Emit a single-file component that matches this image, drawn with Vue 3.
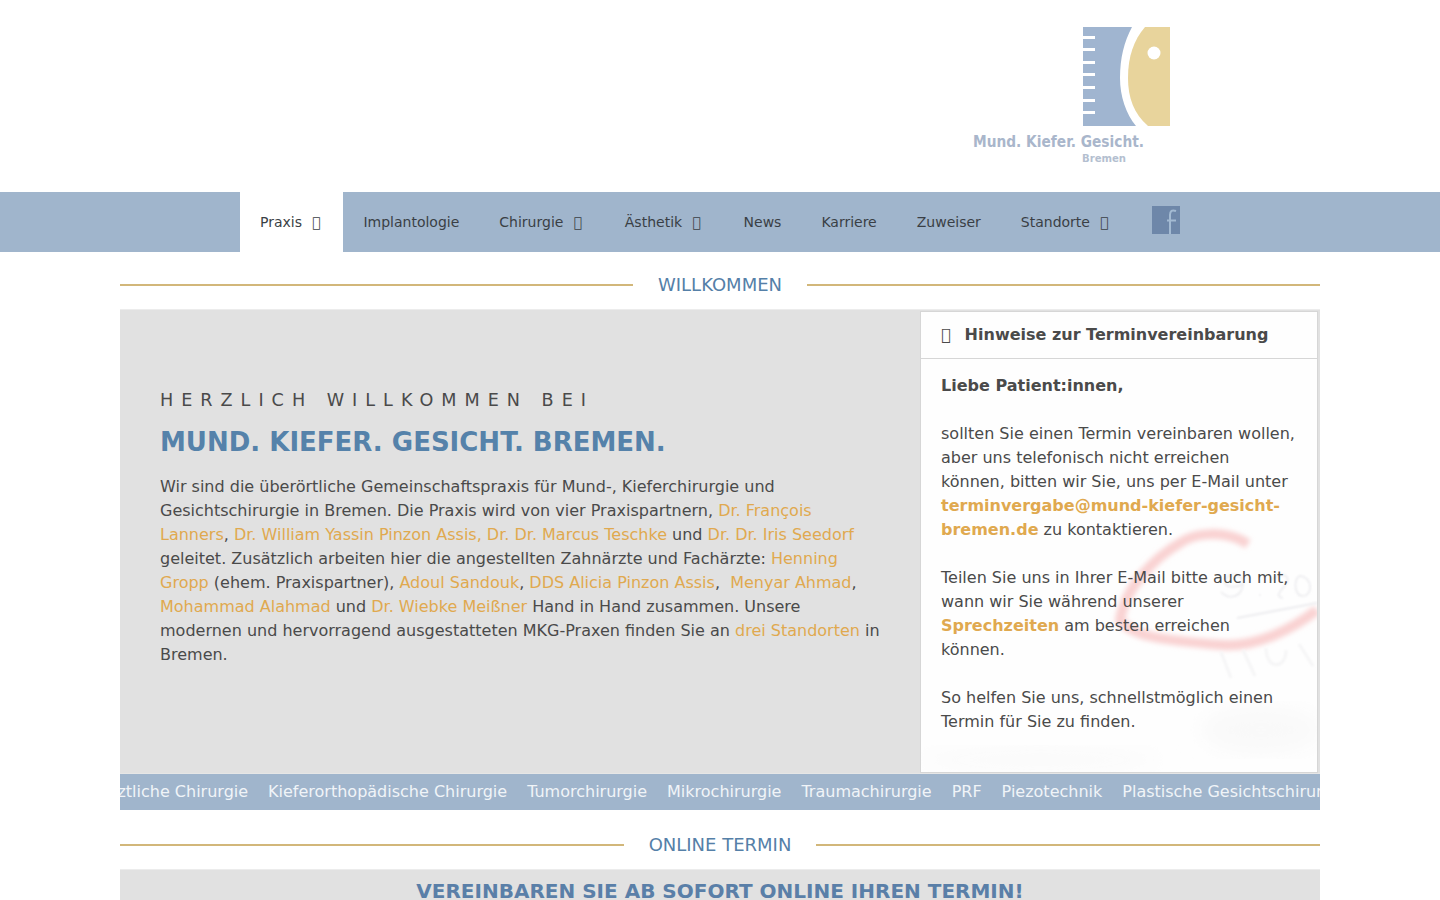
<template>
  <div class="page">
    <header class="top">
      <svg class="logo" width="197" height="140" viewBox="0 0 197 140">
        <defs>
          <filter id="soft"><feGaussianBlur stdDeviation="0.4" /></filter>
        </defs>
        <g filter="url(#soft)">
          <path d="M110 1 H159 C151 16 147 32 147 52 C147 70 153 88 163 100 H110 Z" fill="#a0b5d0" />
          <path d="M172 1 H197 V100 H175 C161 88 155 72 155 52 C155 30 161 14 172 1 Z" fill="#e8d49c" />
          <circle cx="181" cy="27" r="6.5" fill="#fff" />
          <rect v-for="y in ticks" :key="y" x="110" :y="y" width="12" height="3" fill="#fff" />
        </g>
        <text x="0" y="121" class="logo-name" textLength="171" lengthAdjust="spacingAndGlyphs">Mund. Kiefer. Gesicht.</text>
        <text x="109" y="136" class="logo-city" textLength="44" lengthAdjust="spacingAndGlyphs">Bremen</text>
      </svg>
    </header>

    <nav class="nav">
      <div class="nav-inner">
        <div
          v-for="item in navItems"
          :key="item.label"
          class="nav-item"
          :class="{ active: item.active }"
        >
          {{ item.label }}<span v-if="item.caret" class="tofu">&#xf107;</span>
        </div>
        <svg class="fb" width="28" height="28" viewBox="0 0 28 28">
          <rect width="28" height="28" fill="#6e87a9" />
          <path d="M24 5 C20 3.500 18 5 18 9 V28 M15 14.500 H24" fill="none" stroke="#a3bad2" stroke-width="2" />
        </svg>
      </div>
    </nav>

    <main class="content">
      <h2 class="section-title"><span>WILLKOMMEN</span></h2>

      <section class="welcome">
        <div class="welcome-text">
          <h3 class="kicker">HERZLICH WILLKOMMEN BEI</h3>
          <h1 class="headline">MUND. KIEFER. GESICHT. BREMEN.</h1>
          <p>
            Wir sind die überörtliche Gemeinschaftspraxis für Mund-, Kieferchirurgie und
            Gesichtschirurgie in Bremen. Die Praxis wird von vier Praxispartnern,
            <a>Dr. François Lanners</a>, <a>Dr. William Yassin Pinzon Assis,</a> <a>Dr. Dr. Marcus Teschke</a> und <a>Dr. Dr. Iris Seedorf</a> geleitet. Zusätzlich
            arbeiten hier die angestellten Zahnärzte und Fachärzte: <a>Henning Gropp</a>
            (ehem. Praxispartner), <a>Adoul Sandouk</a>, <a>DDS Alicia Pinzon Assis</a>,&nbsp;
            <a>Menyar Ahmad</a>, <a>Mohammad Alahmad</a> und <a>Dr. Wiebke Meißner</a> Hand in
            Hand zusammen. Unsere modernen und hervorragend ausgestatteten MKG-Praxen finden
            Sie an <a>drei Standorten</a> in Bremen.
          </p>
        </div>

        <aside class="notice">
          <svg class="notice-bg" width="396" height="414" viewBox="0 0 396 414">
            <defs>
              <filter id="blur"><feGaussianBlur stdDeviation="2.4" /></filter>
              <filter id="thin"><feGaussianBlur stdDeviation="1" /></filter>
              <filter id="blur2"><feGaussianBlur stdDeviation="10" /></filter>
            </defs>
            <ellipse cx="340" cy="370" rx="60" ry="24" fill="#f9f9f9" filter="url(#blur2)" />
            <ellipse cx="120" cy="400" rx="120" ry="12" fill="#fafafa" filter="url(#blur2)" />
            <path
              d="M327 184 C305 170 275 172 259 183 C235 197 205 225 199 260 C210 275 235 280 302 285 C335 287 370 270 396 250"
              fill="none"
              stroke="#f9d2d2"
              stroke-width="10"
              filter="url(#blur)"
            />
            <path d="M395 218 V228" stroke="#f4b4bc" stroke-width="3" filter="url(#thin)" />
            <path d="M316 258 L396 243" fill="none" stroke="#ededf0" stroke-width="2" filter="url(#thin)" />
            <path
              d="M300 232 C308 240 322 238 322 222 C322 212 304 212 304 222 C304 228 316 228 322 224 M338 235 H340 M352 220 C356 212 370 214 366 222 C362 230 352 236 362 238 M378 216 C372 222 374 236 382 236 C392 236 392 216 378 216"
              fill="none"
              stroke="#e6e6ea"
              stroke-width="1.6"
              filter="url(#thin)"
              opacity="0.8"
            />
            <path d="M300 292 L310 318 M322 290 L334 316 M345 288 C345 310 365 310 365 290 M378 284 L392 306" fill="none" stroke="#f5f5f6" stroke-width="3" filter="url(#thin)" />
          </svg>
          <div class="notice-head"><span class="tofu head-icon">&#xf05a;</span>Hinweise zur Terminvereinbarung</div>
          <div class="notice-body">
            <p><b>Liebe Patient:innen,</b></p>
            <p>
              sollten Sie einen Termin vereinbaren wollen, aber uns telefonisch nicht erreichen
              können, bitten wir Sie, uns per E-Mail unter
              <a class="strong">terminvergabe@mund-kiefer-gesicht-bremen.de</a> zu kontaktieren.
            </p>
            <p>
              Teilen Sie uns in Ihrer E-Mail bitte auch mit, wann wir Sie während unserer
              <a class="strong">Sprechzeiten</a> am besten erreichen können.
            </p>
            <p>So helfen Sie uns, schnellstmöglich einen Termin für Sie zu finden.</p>
          </div>
        </aside>
      </section>

      <div class="ticker">
        <div class="ticker-track">
          <span v-for="t in tickerItems" :key="t">{{ t }}</span>
        </div>
      </div>

      <h2 class="section-title second"><span>ONLINE TERMIN</span></h2>

      <section class="online">
        <h2>VEREINBAREN SIE AB SOFORT ONLINE IHREN TERMIN!</h2>
      </section>
    </main>
  </div>
</template>

<script setup>
const ticks = [10, 22, 35, 47, 60, 73, 85];

const navItems = [
  { label: "Praxis", caret: true, active: true },
  { label: "Implantologie" },
  { label: "Chirurgie", caret: true },
  { label: "Ästhetik", caret: true },
  { label: "News" },
  { label: "Karriere" },
  { label: "Zuweiser" },
  { label: "Standorte", caret: true },
];

const tickerItems = [
  "Zahnärztliche Chirurgie",
  "Kieferorthopädische Chirurgie",
  "Tumorchirurgie",
  "Mikrochirurgie",
  "Traumachirurgie",
  "PRF",
  "Piezotechnik",
  "Plastische Gesichtschirurgie",
];
</script>

<style>
html,
body {
  margin: 0;
  overflow: hidden;
}
</style>

<style scoped>
.page {
  height: 900px;
  overflow: hidden;
  background: #fff;
  color: #4a4a4a;
  font-family: "DejaVu Sans", sans-serif;
  font-size: 16px;
  line-height: 24px;
}

.top {
  height: 192px;
  display: flex;
  justify-content: flex-end;
  padding: 26px 270px 0 0;
  box-sizing: border-box;
}

.logo {
  display: block;
}

.logo-name {
  font-family: "DejaVu Sans Condensed", "DejaVu Sans", sans-serif;
  font-size: 15px;
  font-weight: 700;
  fill: #a9b6cb;
}

.logo-city {
  font-family: "DejaVu Sans Condensed", "DejaVu Sans", sans-serif;
  font-size: 10px;
  font-weight: 700;
  fill: #b4bfd0;
}

.nav {
  height: 60px;
  background: #a0b5cc;
}

.nav-inner {
  width: 960px;
  margin: 0 auto;
  display: flex;
  font-size: 14px;
  color: #3a3f45;
}

.nav-item {
  height: 60px;
  padding: 0 20px;
  display: flex;
  align-items: center;
  white-space: pre;
}

.nav-item.active {
  background: #fff;
}

.tofu {
  margin: 0 3px 0 10px;
}

.fb {
  margin: 14px 0 0 21px;
}

.content {
  width: 1200px;
  margin: 0 auto;
}

.section-title {
  margin: 0;
  height: 57px;
  padding-top: 8px;
  box-sizing: border-box;
  display: flex;
  align-items: center;
  gap: 25px;
  font-size: 18px;
  font-weight: 400;
  color: #5580a8;
}

.section-title::before,
.section-title::after {
  content: "";
  flex: 1;
  height: 2px;
  background: #d2b77a;
}

.section-title.second {
  height: 59px;
  padding-top: 10px;
}

.welcome {
  display: flex;
  height: 464px;
  background: #e1e1e1;
  border-top: 1px solid #ececec;
  box-sizing: border-box;
}

.welcome-text {
  width: 800px;
  box-sizing: border-box;
  padding: 78px 40px 0;
}

.kicker {
  margin: 0 0 12px;
  font-size: 17.6px;
  font-weight: 400;
  letter-spacing: 8px;
  color: #4a4a4a;
}

.headline {
  margin: 0 0 15px;
  font-size: 26px;
  line-height: 36px;
  font-weight: 700;
  color: #5582aa;
}

.welcome-text p {
  margin: 0;
}

a {
  color: #e0a94f;
}

a.strong {
  font-weight: 700;
}

.notice {
  position: relative;
  width: 398px;
  margin: 1px 0 0;
  background: #fefefe;
  border: 1px solid #d6d6d6;
  box-sizing: border-box;
  overflow: hidden;
}

.notice-bg {
  position: absolute;
  left: 0;
  top: 48px;
}

.notice-head {
  position: relative;
  height: 47px;
  box-sizing: border-box;
  padding: 0 20px;
  display: flex;
  align-items: center;
  font-weight: 700;
  border-bottom: 1px solid #d6d6d6;
}

.head-icon {
  margin: 0 14px 0 0;
  font-weight: 400;
}

.notice-body {
  position: relative;
  padding: 15px 20px 0;
}

.notice-body p {
  margin: 0 0 24px;
}

.ticker {
  height: 37px;
  background: #a0b5cc;
  overflow: hidden;
  border-top: 1px solid #e6e6e6;
  box-sizing: border-box;
}

.ticker-track {
  display: flex;
  gap: 20px;
  color: #f0f4f8;
  line-height: 35px;
  white-space: nowrap;
  transform: translateX(-60px);
}

.online {
  height: 60px;
  background: #e1e1e1;
  border-top: 1px solid #ececec;
  text-align: center;
}

.online h2 {
  margin: 0;
  padding-top: 9px;
  font-size: 20px;
  color: #5a7fa8;
}
</style>
